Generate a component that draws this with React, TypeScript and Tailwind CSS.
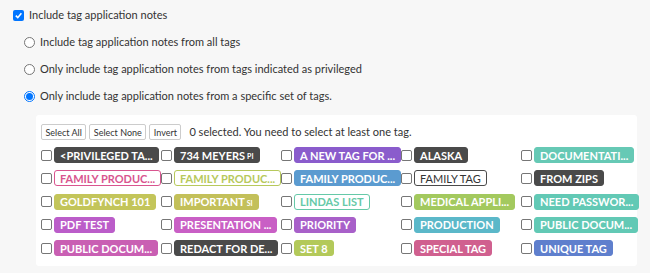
import React from "react";

type Tag = { label: string; bg?: string; outline?: string; suffix?: string };

const tags: Tag[] = [
  { label: "<PRIVILEGED TA...", bg: "#4a4a4a" },
  { label: "734 MEYERS", bg: "#4a4a4a", suffix: "PI" },
  { label: "A NEW TAG FOR ...", bg: "#8a5ccc" },
  { label: "ALASKA", bg: "#4a4a4a" },
  { label: "DOCUMENTATI...", bg: "#66c9b5" },
  { label: "FAMILY PRODUC...", outline: "#d9558f" },
  { label: "FAMILY PRODUC...", outline: "#b7c95c" },
  { label: "FAMILY PRODUC...", bg: "#5b9bd0" },
  { label: "FAMILY TAG", outline: "#4a4a4a" },
  { label: "FROM ZIPS", bg: "#4a4a4a" },
  { label: "GOLDFYNCH 101", bg: "#c3c55a" },
  { label: "IMPORTANT", bg: "#c3c05a", suffix: "SI" },
  { label: "LINDAS LIST", outline: "#66c9a8" },
  { label: "MEDICAL APPLI...", bg: "#a3c95e" },
  { label: "NEED PASSWOR...", bg: "#62c9b5" },
  { label: "PDF TEST", bg: "#bb5dc9" },
  { label: "PRESENTATION ...", bg: "#c95fc5" },
  { label: "PRIORITY", bg: "#a860c9" },
  { label: "PRODUCTION", bg: "#5bb8c9" },
  { label: "PUBLIC DOCUM...", bg: "#62c9b5" },
  { label: "PUBLIC DOCUM...", bg: "#c95fb3" },
  { label: "REDACT FOR DE...", bg: "#4a4a4a" },
  { label: "SET 8", bg: "#b3c95a" },
  { label: "SPECIAL TAG", bg: "#d0608f" },
  { label: "UNIQUE TAG", bg: "#5f7fcd" },
];

function Box() {
  return (
    <span className="inline-block w-[11px] h-[11px] shrink-0 rounded-[2px] border border-[#767676] bg-white" />
  );
}

function Radio({ checked }: { checked?: boolean }) {
  return (
    <span
      className={
        "inline-flex w-[11px] h-[11px] shrink-0 rounded-full items-center justify-center bg-white border " +
        (checked ? "border-[#0075ff]" : "border-[#767676]")
      }
    >
      {checked && <span className="w-[7px] h-[7px] rounded-full bg-[#0075ff]" />}
    </span>
  );
}

function TagChip({ t }: { t: Tag }) {
  const style: React.CSSProperties = t.bg
    ? { backgroundColor: t.bg, color: "#fff", border: `1px solid ${t.bg}` }
    : { backgroundColor: "#fff", color: t.outline === "#4a4a4a" ? "#333" : t.outline, border: `1px solid ${t.outline}` };
  return (
    <span
      className={
        "inline-flex items-center h-[16px] px-[5px] rounded-[3px] text-[11px] leading-none whitespace-nowrap " +
        (t.outline === "#4a4a4a" ? "font-normal" : "font-bold")
      }
      style={style}
    >
      {t.label}
      {t.suffix && <span className="text-[7px] ml-[2px] mt-[3px]">{t.suffix}</span>}
    </span>
  );
}

const btn =
  "h-[16px] px-[3.5px] text-[9px] border border-[#ccc] rounded-[2px] bg-white text-[#333] leading-none";

export default function App() {
  return (
    <div
      className="w-[650px] h-[273px] bg-[#f7f7f7] text-[#333] overflow-hidden"
      style={{ fontFamily: "Lato, 'Open Sans', sans-serif" }}
    >
      <div className="pt-[9px] pl-[13px]">
        <label className="flex items-center gap-[5px] text-[11px] h-[13px]">
          <span className="inline-flex w-[11px] h-[11px] rounded-[2px] bg-[#0075ff] items-center justify-center">
            <svg width="9" height="9" viewBox="0 0 10 10">
              <path d="M2 5.2 L4.2 7.4 L8.2 2.6" stroke="#fff" strokeWidth="1.8" fill="none" />
            </svg>
          </span>
          Include tag application notes
        </label>
      </div>
      <div className="pl-[24px] mt-[14px] flex flex-col gap-[14px] text-[11px]">
        <label className="flex items-center gap-[5px] h-[13px]">
          <Radio />
          Include tag application notes from all tags
        </label>
        <label className="flex items-center gap-[5px] h-[13px]">
          <Radio />
          Only include tag application notes from tags indicated as privileged
        </label>
        <label className="flex items-center gap-[5px] h-[13px]">
          <Radio checked />
          Only include tag application notes from a specific set of tags.
        </label>
      </div>
      <div className="ml-[36px] mr-[13px] mt-[12px] bg-white rounded-[3px] pt-[9px] pb-[10px] pl-[5px] pr-[6px]">
        <div className="flex items-center gap-[3px] h-[16px]">
          <button className={btn}>Select All</button>
          <button className={btn}>Select None</button>
          <button className={btn}>Invert</button>
          <span className="ml-[5px] text-[11px]">0 selected. You need to select at least one tag.</span>
        </div>
        <div className="grid grid-cols-[120px_120px_120px_120px_120px] gap-y-[7.3px] mt-[7px]">
          {tags.map((t, i) => (
            <div key={i} className="flex items-center gap-[2px] h-[16px]">
              <Box />
              <TagChip t={t} />
            </div>
          ))}
        </div>
      </div>
    </div>
  );
}
